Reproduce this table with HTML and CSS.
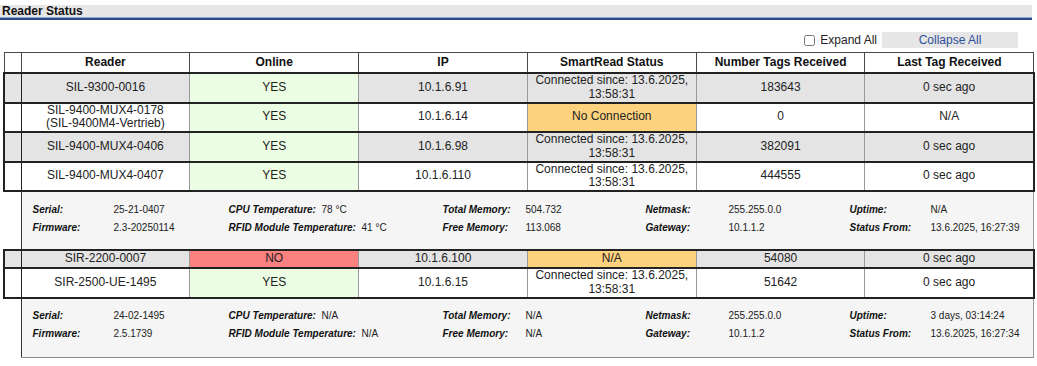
FILE: index.html
```html
<!DOCTYPE html>
<html>
<head>
<meta charset="utf-8">
<link rel="stylesheet" href="styles.css">
</head>
<body>
<div class="title">Reader Status</div>
<div class="rule"></div>
<div class="toolbar">
  <label class="expand"><input type="checkbox" class="chk"><span>Expand All</span></label>
  <span class="collapse">Collapse All</span>
</div>
<table class="readers">
  <colgroup>
    <col class="c-exp"><col class="c-main"><col class="c-main"><col class="c-main"><col class="c-main"><col class="c-main"><col class="c-main">
  </colgroup>
  <thead>
    <tr><th class="exp"></th><th>Reader</th><th>Online</th><th>IP</th><th>SmartRead Status</th><th>Number Tags Received</th><th class="last">Last Tag Received</th></tr>
  </thead>
  <tbody>
    <tr class="reader odd">
      <td class="exp"></td><td>SIL-9300-0016</td><td class="yes">YES</td><td>10.1.6.91</td><td>Connected since: 13.6.2025,<br>13:58:31</td><td>183643</td><td class="last">0 sec ago</td>
    </tr>
    <tr class="reader">
      <td class="exp"></td><td>SIL-9400-MUX4-0178<br>(SIL-9400M4-Vertrieb)</td><td class="yes">YES</td><td>10.1.6.14</td><td class="warn">No Connection</td><td>0</td><td class="last">N/A</td>
    </tr>
    <tr class="reader odd">
      <td class="exp"></td><td>SIL-9400-MUX4-0406</td><td class="yes">YES</td><td>10.1.6.98</td><td>Connected since: 13.6.2025,<br>13:58:31</td><td>382091</td><td class="last">0 sec ago</td>
    </tr>
    <tr class="reader">
      <td class="exp"></td><td>SIL-9400-MUX4-0407</td><td class="yes">YES</td><td>10.1.6.110</td><td>Connected since: 13.6.2025,<br>13:58:31</td><td>444555</td><td class="last">0 sec ago</td>
    </tr>
    <tr class="detail">
      <td class="blank"></td>
      <td colspan="6" class="info">
        <div class="grid">
          <span class="lbl">Serial:</span><span>25-21-0407</span><span><span class="lbl">CPU Temperature:</span>&nbsp; 78 °C</span><span class="lbl">Total Memory:</span><span>504.732</span><span class="lbl">Netmask:</span><span>255.255.0.0</span><span class="lbl">Uptime:</span><span>N/A</span>
          <span class="lbl">Firmware:</span><span>2.3-20250114</span><span><span class="lbl">RFID Module Temperature:</span>&nbsp; 41 °C</span><span class="lbl">Free Memory:</span><span>113.068</span><span class="lbl">Gateway:</span><span>10.1.1.2</span><span class="lbl">Status From:</span><span>13.6.2025, 16:27:39</span>
        </div>
      </td>
    </tr>
    <tr class="reader odd">
      <td class="exp"></td><td>SIR-2200-0007</td><td class="no">NO</td><td>10.1.6.100</td><td class="warn">N/A</td><td>54080</td><td class="last">0 sec ago</td>
    </tr>
    <tr class="reader">
      <td class="exp"></td><td>SIR-2500-UE-1495</td><td class="yes">YES</td><td>10.1.6.15</td><td>Connected since: 13.6.2025,<br>13:58:31</td><td>51642</td><td class="last">0 sec ago</td>
    </tr>
    <tr class="detail end">
      <td class="blank"></td>
      <td colspan="6" class="info">
        <div class="grid">
          <span class="lbl">Serial:</span><span>24-02-1495</span><span><span class="lbl">CPU Temperature:</span>&nbsp; N/A</span><span class="lbl">Total Memory:</span><span>N/A</span><span class="lbl">Netmask:</span><span>255.255.0.0</span><span class="lbl">Uptime:</span><span>3 days, 03:14:24</span>
          <span class="lbl">Firmware:</span><span>2.5.1739</span><span><span class="lbl">RFID Module Temperature:</span>&nbsp; N/A</span><span class="lbl">Free Memory:</span><span>N/A</span><span class="lbl">Gateway:</span><span>10.1.1.2</span><span class="lbl">Status From:</span><span>13.6.2025, 16:27:34</span>
        </div>
      </td>
    </tr>
  </tbody>
</table>
</body>
</html>
```
FILE: styles.css
```css
html, body {
  margin: 0;
  padding: 0;
  background: #ffffff;
  font-family: "Liberation Sans", Arial, sans-serif;
  color: #222222;
}

.title {
  margin: 5px 5px 0 0;
  padding-left: 2px;
  height: 12px;
  line-height: 12px;
  font-size: 12px;
  font-weight: bold;
  color: #111111;
  background: #e6e6e6;
  border-bottom: 1px solid #8ea8d4;
}

.rule {
  margin-right: 5px;
  height: 2px;
  background: #2c4b8c;
}

.toolbar {
  display: flex;
  justify-content: flex-end;
  align-items: center;
  margin-top: 12px;
  padding-right: 19px;
  height: 16px;
}

.expand {
  display: flex;
  align-items: center;
  font-size: 12px;
  color: #222222;
}

.chk {
  width: 11px;
  height: 11px;
  margin: 0 5px 0 0;
}

.collapse {
  display: block;
  margin-left: 5px;
  width: 136px;
  height: 16px;
  line-height: 16px;
  text-align: center;
  background: #e6e6e6;
  color: #2f4f9b;
  font-size: 12px;
}

.readers {
  margin: 4px 0 0 3px;
  width: 1030px;
  border-collapse: collapse;
  table-layout: fixed;
  font-size: 12px;
}

.c-exp { width: 17px; }
.c-main { width: 168.8px; }

.readers th {
  border: 1px solid #4a4a4a;
  padding: 3px 2px;
  height: 13px;
  line-height: 13px;
  font-weight: bold;
  text-align: center;
  color: #111111;
}

.reader td {
  border-top: 2px solid #222222;
  border-bottom: 2px solid #222222;
  border-left: 1px solid #9a9a9a;
  border-right: 1px solid #9a9a9a;
  padding: 0 2px;
  height: 16px;
  line-height: 13.75px;
  text-align: center;
  vertical-align: middle;
  color: #222222;
  background: #ffffff;
}

.reader.odd td {
  background: #e4e4e4;
}

.reader td.exp {
  border-left: 2px solid #222222;
  border-right: 1px solid #222222;
}

.reader td.last {
  border-right: 2px solid #222222;
}

.reader td.yes,
.reader.odd td.yes {
  background: #ebfde2;
}

.reader td.no,
.reader.odd td.no {
  background: #fb8080;
}

.reader td.warn,
.reader.odd td.warn {
  background: #fdd27f;
}

.detail td.blank {
  border: none;
  background: #ffffff;
}

.detail td.info {
  border-left: 1px solid #333333;
  border-right: 1px solid #9a9a9a;
  border-bottom: 1px solid #8a8a8a;
  background: #f5f5f5;
  padding: 8px 0 13px 11px;
}

.detail.end td.info {
  padding: 8px 0 14px 11px;
}

.grid {
  display: grid;
  grid-template-columns: 81px 115px 214px 83px 120px 83px 121px 81px 1fr;
  grid-auto-rows: 18px;
  align-items: center;
  font-size: 10px;
  color: #222222;
}

.lbl {
  font-weight: bold;
  font-style: italic;
  color: #111111;
}
```
